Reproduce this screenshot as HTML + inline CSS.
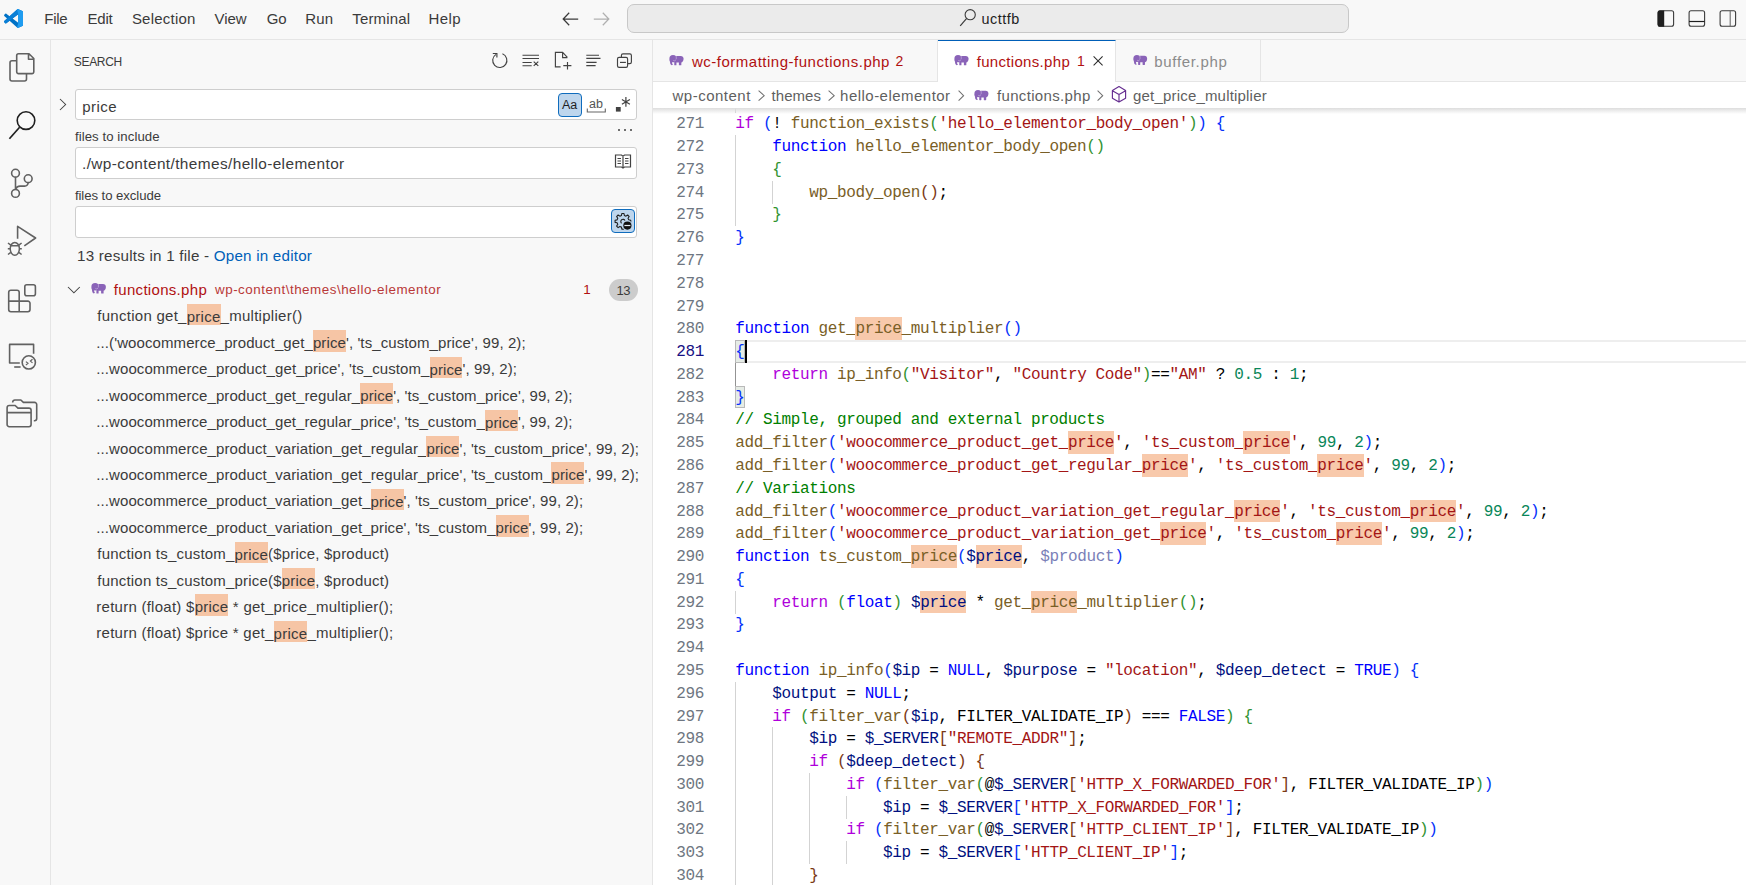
<!DOCTYPE html>
<html><head><meta charset="utf-8"><title>VS Code</title>
<style>
*{box-sizing:border-box;margin:0;padding:0}
html,body{width:1746px;height:885px;overflow:hidden;background:#f8f8f8;font-family:"Liberation Sans", sans-serif;color:#3b3b3b}
.abs{position:absolute}
.t{position:absolute;white-space:pre;line-height:1;font-family:"Liberation Sans", sans-serif}
svg{position:absolute;overflow:visible}
.ln{position:absolute;left:653px;width:51px;text-align:right;font-family:"Liberation Mono", monospace;font-size:16px;letter-spacing:-0.364px;color:#6e7681;white-space:pre}
.cl{position:absolute;left:735.3px;font-family:"Liberation Mono", monospace;font-size:16px;letter-spacing:-0.364px;white-space:pre;color:#000}
.k{color:#af00db}.f{color:#0000ff}.n{color:#795e26}.s{color:#a31515}.m{color:#098658}.c{color:#008000}.v{color:#001080}
.b1{color:#0431fa}.b2{color:#319331}.b3{color:#7b3814}.u{color:#7a7fb8}
.cl .hl{background:#f8c9ab;padding:2.9px 0 1.6px}
.t .hl{background:#f6c5a5;padding:3.6px 0 0.8px}
</style></head><body>

<div class="abs" style="left:0;top:0;width:1746px;height:40px;background:#f8f8f8;border-bottom:1px solid #e5e5e5"></div>
<svg style="left:4px;top:8.8px" width="19" height="19" viewBox="0 0 100 100">
<path d="M96.5 10.8 75.9 0.9c-2.4-1.2-5.2-0.7-7.1 1.2L29.4 38.1 12.2 25.1c-1.6-1.2-3.8-1.1-5.3 0.2L1.4 30.3c-1.8 1.7-1.8 4.5 0 6.2L16.3 50 1.4 63.5c-1.8 1.7-1.8 4.5 0 6.2l5.5 5c1.5 1.4 3.7 1.5 5.3 0.2l17.2-13L68.8 97.9c1.9 1.9 4.7 2.4 7.1 1.2l20.6-9.9c2.2-1 3.5-3.2 3.5-5.6V16.4c0-2.4-1.4-4.6-3.5-5.6zM75 72.7 45.1 50 75 27.3z" fill="#0072c6"/>
<path d="M29.4 61.9 12.2 74.9c-1.6 1.2-3.8 1.1-5.3-0.2l-5.5-5c-1.8-1.7-1.8-4.5 0-6.2L68.8 2.1c1.9-1.9 4.7-2.4 7.1-1.2L75 27.3z" fill="#0a7fd6"/>
<path d="M96.5 10.8 75.9 0.9c-2.4-1.2-5.2-0.7-7.1 1.2L75 27.3V72.7L68.8 97.9c1.9 1.9 4.7 2.4 7.1 1.2l20.6-9.9c2.2-1 3.5-3.2 3.5-5.6V16.4c0-2.4-1.4-4.6-3.5-5.6z" fill="#1f9cf0"/>
</svg>
<svg style="left:560px;top:10px" width="20" height="18" viewBox="0 0 20 18"><path d="M9.2 2.8 3.2 9 9.2 15.2M3.2 9H18.2" stroke="#3b3b3b" stroke-width="1.25" fill="none"/></svg>
<svg style="left:592px;top:10px" width="20" height="18" viewBox="0 0 20 18"><path d="M10.8 2.8 16.8 9 10.8 15.2M16.8 9H1.8" stroke="#b0b0b0" stroke-width="1.25" fill="none"/></svg>
<div class="abs" style="left:627px;top:4px;width:722px;height:29px;background:#ebebeb;border:1px solid #c8c8c8;border-radius:7px"></div>
<svg style="left:959px;top:8px" width="18" height="19" viewBox="0 0 18 19"><circle cx="11.2" cy="6.7" r="5.1" stroke="#3b3b3b" stroke-width="1.1" fill="none"/><path d="M7.7 10.4 1.2 17.8" stroke="#3b3b3b" stroke-width="1.2"/></svg>
<svg style="left:1657px;top:10px" width="18" height="18" viewBox="0 0 18 18"><rect x="1.1" y="0.7" width="15.5" height="15.6" rx="2" stroke="#3b3b3b" stroke-width="1.1" fill="none"/><path d="M0.6 2.7a2.2 2.2 0 0 1 2.2-2.2H7.2V16.7H2.8A2.2 2.2 0 0 1 0.6 14.5z" fill="#1f1f1f"/></svg>
<svg style="left:1688px;top:10px" width="18" height="18" viewBox="0 0 18 18"><rect x="1.1" y="0.7" width="15.5" height="15.6" rx="2" stroke="#3b3b3b" stroke-width="1.1" fill="none"/><path d="M1 11.5H16.5" stroke="#1f1f1f" stroke-width="1.2"/></svg>
<svg style="left:1719px;top:10px" width="18" height="18" viewBox="0 0 18 18"><rect x="1.1" y="0.7" width="15.5" height="15.6" rx="2" stroke="#3b3b3b" stroke-width="1.1" fill="none"/><path d="M11.2 0.7V16.3" stroke="#6b6b6b" stroke-width="1.1"/></svg>
<div class="abs" style="left:0;top:40px;width:51px;height:845px;background:#f8f8f8;border-right:1px solid #e5e5e5"></div>
<svg style="left:0;top:40px" width="50" height="50" viewBox="0 0 50 50"><path d="M16.6 20.8h-4.6a2 2 0 0 0-2 2V39a2 2 0 0 0 2 2H24.5a2 2 0 0 0 2-2V34" stroke="#616161" stroke-width="1.6" fill="none"/><path d="M18.5 13.7h10.5l4.8 4.8V31.8a1.8 1.8 0 0 1-1.8 1.8H18.5a1.8 1.8 0 0 1-1.8-1.8V15.5a1.8 1.8 0 0 1 1.8-1.8zM28.5 14v5.2h5.2" stroke="#616161" stroke-width="1.6" fill="none" stroke-linejoin="round"/></svg>
<svg style="left:0;top:100px" width="50" height="50" viewBox="0 0 50 50"><circle cx="26" cy="20.6" r="8.8" stroke="#1f1f1f" stroke-width="1.6" fill="none"/><path d="M19.6 27.2 9.4 38.8" stroke="#1f1f1f" stroke-width="1.7"/></svg>
<svg style="left:0;top:155px" width="50" height="50" viewBox="0 0 50 50"><circle cx="15.5" cy="18.2" r="3.9" stroke="#616161" stroke-width="1.6" fill="none"/><circle cx="28.2" cy="23.7" r="3.9" stroke="#616161" stroke-width="1.6" fill="none"/><circle cx="15.5" cy="38.4" r="3.9" stroke="#616161" stroke-width="1.6" fill="none"/><path d="M15.5 22.1V34.5M15.8 33.8c0.8-1.6 2.2-2.7 4.2-2.7h4.6c1.9 0 3.3-1.4 3.6-3.6" stroke="#616161" stroke-width="1.6" fill="none"/></svg>
<svg style="left:0;top:210px" width="50" height="50" viewBox="0 0 50 50"><path d="M17.6 28.8V16.4L35.6 28 24.3 35.8" stroke="#616161" stroke-width="1.6" fill="none" stroke-linejoin="round"/><ellipse cx="14.8" cy="38.8" rx="4.6" ry="6.4" stroke="#616161" stroke-width="1.5" fill="none"/><path d="M10.2 35.8H19.4M8 33l2.8 2.2M21.6 33l-2.8 2.2M7.8 38.8h2.6M19.2 38.8h2.6M8 44.5l2.8-2.2M21.6 44.5l-2.8-2.2" stroke="#616161" stroke-width="1.5" fill="none"/></svg>
<svg style="left:0;top:270px" width="50" height="50" viewBox="0 0 50 50"><path d="M8.7 22.4a2.2 2.2 0 0 1 2.2-2.2H17a2.2 2.2 0 0 1 2.2 2.2V31.1H27.8a2.2 2.2 0 0 1 2.2 2.2V39.6a2.2 2.2 0 0 1-2.2 2.2H10.9a2.2 2.2 0 0 1-2.2-2.2zM8.7 31.1H19.2V41.8" stroke="#616161" stroke-width="1.6" fill="none"/><rect x="24.8" y="14.8" width="10.6" height="10.9" rx="2" stroke="#616161" stroke-width="1.6" fill="none"/></svg>
<svg style="left:0;top:330px" width="50" height="50" viewBox="0 0 50 50"><path d="M19.8 33H9.6V14.4H33.6V23.8" stroke="#616161" stroke-width="1.6" fill="none" stroke-linejoin="round"/><path d="M14.2 37H20.6" stroke="#616161" stroke-width="1.6"/><circle cx="28.8" cy="32.4" r="6.6" stroke="#616161" stroke-width="1.6" fill="none"/><path d="M25.9 31.6 28 33.3 25.9 35.1M32.5 29.3 30.4 31.1 32.5 32.9" stroke="#616161" stroke-width="1.2" fill="none"/></svg>
<svg style="left:0;top:390px" width="50" height="50" viewBox="0 0 50 50"><path d="M12.7 12.6V12.2a2.2 2.2 0 0 1 2.2-2.2H20.8l2.6 2.4H34.5a2.2 2.2 0 0 1 2.2 2.2V28.6a2.2 2.2 0 0 1-2.2 2.2H33.8" stroke="#616161" stroke-width="1.6" fill="none"/><path d="M7.1 17.7a2.2 2.2 0 0 1 2.2-2.2H15.1l2.9 2.6H28.9a2.2 2.2 0 0 1 2.2 2.2V34.5a2.2 2.2 0 0 1-2.2 2.2H9.3a2.2 2.2 0 0 1-2.2-2.2zM7.1 22.6H31.1" stroke="#616161" stroke-width="1.6" fill="none"/></svg>
<div class="abs" style="left:51px;top:40px;width:602px;height:845px;background:#f8f8f8;border-right:1px solid #e5e5e5"></div>
<svg style="left:485px;top:47px" width="24" height="24" viewBox="0 0 24 24"><path d="M17.46 6.82A7.1 7.1 0 1 1 11.04 7.38" stroke="#424242" stroke-width="1.15" fill="none"/><path d="M7.8 6.5H11.9V10.6" stroke="#424242" stroke-width="1.15" fill="none"/></svg>
<svg style="left:520px;top:52px" width="20" height="18" viewBox="0 0 20 18"><path d="M2.5 3.2H19M2.5 6.5H19M2.5 10.5H11.7M2.5 13.7H11.7M13.7 9.6l4.6 4.3M18.3 9.6l-4.6 4.3" stroke="#424242" stroke-width="1.15" fill="none"/></svg>
<svg style="left:553px;top:50px" width="20" height="22" viewBox="0 0 20 22"><path d="M7.6 16.8H2.4V2.4H9.6L14.4 7.3M9.6 2.4V7.6H14.4M14.5 12V19.5M10.3 15.6H18.4" stroke="#424242" stroke-width="1.15" fill="none"/></svg>
<svg style="left:584px;top:52px" width="20" height="18" viewBox="0 0 20 18"><path d="M2.3 3.2H15M2.3 6.4H16.5M2.3 10.4H12.6M2.3 13.6H11.6" stroke="#424242" stroke-width="1.15" fill="none"/></svg>
<svg style="left:615px;top:51px" width="20" height="20" viewBox="0 0 20 20"><path d="M6.4 6.3V4.4A1.6 1.6 0 0 1 8 2.8H14.8A1.6 1.6 0 0 1 16.4 4.4V11A1.6 1.6 0 0 1 14.8 12.6H12.6" stroke="#424242" stroke-width="1.15" fill="none"/><rect x="2.5" y="6.3" width="10.1" height="10.1" rx="1.6" stroke="#424242" stroke-width="1.15" fill="none"/><path d="M5 11.4H10.9" stroke="#424242" stroke-width="1.15"/></svg>
<svg style="left:57px;top:97px" width="12" height="15" viewBox="0 0 12 15"><path d="M3 2 8.6 7.5 3 13" stroke="#424242" stroke-width="1.05" fill="none"/></svg>
<div class="abs" style="left:75px;top:89px;width:562px;height:31px;background:#fff;border:1px solid #cecece;border-radius:3px"></div>
<div class="abs" style="left:558px;top:93px;width:24px;height:24px;background:#bed6ed;border:1px solid #0f6cbd;border-radius:4px"></div>
<div class="t" style="left:562px;top:99px;font-size:12.5px;color:#1f1f1f">Aa</div>
<div class="t" style="left:589px;top:98px;font-size:12.5px;color:#555">ab</div>
<svg style="left:586px;top:108px" width="22" height="6" viewBox="0 0 22 6"><path d="M1.3 0.5V4H19.3V0.5" stroke="#666" stroke-width="1.1" fill="none"/></svg>
<svg style="left:614px;top:95px" width="18" height="18" viewBox="0 0 18 18"><rect x="1.9" y="12" width="4.8" height="4.6" fill="#424242"/><path d="M11.9 2.1V11.7M7.9 4.6l8 4.6M15.9 4.6 7.9 9.2" stroke="#424242" stroke-width="1.2" fill="none"/></svg>
<div class="abs" style="left:618px;top:128.5px;width:2.2px;height:2.2px;background:#424242;border-radius:1px"></div>
<div class="abs" style="left:624px;top:128.5px;width:2.2px;height:2.2px;background:#424242;border-radius:1px"></div>
<div class="abs" style="left:630px;top:128.5px;width:2.2px;height:2.2px;background:#424242;border-radius:1px"></div>
<div class="abs" style="left:75px;top:147px;width:562px;height:32px;background:#fff;border:1px solid #cecece;border-radius:3px"></div>
<svg style="left:613px;top:152px" width="20" height="18" viewBox="0 0 20 18"><path d="M2.5 3H8.5L10 4.2 11.5 3H17.5V15H11.5L10 16 8.5 15H2.5zM10 4.2V16M4.5 6.5H8M4.5 9H8M4.5 11.5H8M12 6.5H15.5M12 9H15.5M12 11.5H15.5" stroke="#424242" stroke-width="1.2" fill="none"/></svg>
<div class="abs" style="left:75px;top:206px;width:562px;height:32px;background:#fff;border:1px solid #cecece;border-radius:3px"></div>
<div class="abs" style="left:611px;top:209px;width:24px;height:24px;background:#bed6ed;border:1px solid #0f6cbd;border-radius:4px"></div>
<svg style="left:606px;top:204px" width="34" height="34" viewBox="0 0 34 34"><path d="M15.45 11.48 L15.80 9.48 L18.00 9.48 L18.35 11.48 L19.99 12.16 L21.65 10.99 L23.21 12.55 L22.04 14.21 L22.72 15.85 L24.72 16.20 L24.72 18.40 L22.72 18.75 L22.04 20.39 L23.21 22.05 L21.65 23.61 L19.99 22.44 L18.35 23.12 L18.00 25.12 L15.80 25.12 L15.45 23.12 L13.81 22.44 L12.15 23.61 L10.59 22.05 L11.76 20.39 L11.08 18.75 L9.08 18.40 L9.08 16.20 L11.08 15.85 L11.76 14.21 L10.59 12.55 L12.15 10.99 L13.81 12.16z" stroke="#1f1f1f" stroke-width="1.1" fill="none" stroke-linejoin="round"/><path d="M15.6 19.2A2.2 2.2 0 1 1 19 16.6" stroke="#1f1f1f" stroke-width="1.1" fill="none"/><circle cx="21.4" cy="21.5" r="5.2" fill="#bed6ed"/><circle cx="21.4" cy="21.6" r="4.1" fill="#111"/><path d="M18.4 21.5H24.4" stroke="#e8eef5" stroke-width="1.2"/></svg>
<svg style="left:66px;top:283px" width="16" height="12" viewBox="0 0 16 12"><path d="M2 4 7.9 9.8 13.8 4" stroke="#424242" stroke-width="1.05" fill="none"/></svg>
<svg style="left:91px;top:283px" width="15.00" height="11.00" viewBox="0 0 15 11"><g fill="#8a63b8"><ellipse cx="4.1" cy="3.8" rx="3.7" ry="3.7"/><path d="M7 0.9H12C13.8 0.9 14.9 2.2 14.9 3.9 14.9 5.8 13.9 7.7 12.2 7.7H7z"/><path d="M0.5 4.5 2.8 5.6 3.4 9.2 4.2 9.8 2.6 10.4 1.4 9.2z"/><rect x="5.4" y="5.5" width="2.2" height="5.1" rx="0.5"/><rect x="10.1" y="5.5" width="2.5" height="5.1" rx="0.5"/></g><path d="M7.4 0.6V4.3M4.4 5.6Q5.8 6.6 7.2 4.9" stroke="#e9def5" stroke-width="0.45" fill="none"/></svg>
<div class="abs" style="left:609px;top:279px;width:29px;height:22px;background:#cccccc;border-radius:11px"></div>
<div class="abs" style="left:653px;top:40px;width:1093px;height:42px;background:#f8f8f8;border-bottom:1px solid #e5e5e5"></div>
<div class="abs" style="left:653px;top:40px;width:285px;height:41px;border-right:1px solid #e5e5e5"></div>
<svg style="left:669px;top:55px" width="14.70" height="10.78" viewBox="0 0 15 11"><g fill="#8a63b8"><ellipse cx="4.1" cy="3.8" rx="3.7" ry="3.7"/><path d="M7 0.9H12C13.8 0.9 14.9 2.2 14.9 3.9 14.9 5.8 13.9 7.7 12.2 7.7H7z"/><path d="M0.5 4.5 2.8 5.6 3.4 9.2 4.2 9.8 2.6 10.4 1.4 9.2z"/><rect x="5.4" y="5.5" width="2.2" height="5.1" rx="0.5"/><rect x="10.1" y="5.5" width="2.5" height="5.1" rx="0.5"/></g><path d="M7.4 0.6V4.3M4.4 5.6Q5.8 6.6 7.2 4.9" stroke="#e9def5" stroke-width="0.45" fill="none"/></svg>
<div class="abs" style="left:938px;top:40px;width:178px;height:42px;background:#fff;border-top:1px solid #005fb8;border-right:1px solid #e5e5e5"></div>
<svg style="left:954px;top:55px" width="14.70" height="10.78" viewBox="0 0 15 11"><g fill="#8a63b8"><ellipse cx="4.1" cy="3.8" rx="3.7" ry="3.7"/><path d="M7 0.9H12C13.8 0.9 14.9 2.2 14.9 3.9 14.9 5.8 13.9 7.7 12.2 7.7H7z"/><path d="M0.5 4.5 2.8 5.6 3.4 9.2 4.2 9.8 2.6 10.4 1.4 9.2z"/><rect x="5.4" y="5.5" width="2.2" height="5.1" rx="0.5"/><rect x="10.1" y="5.5" width="2.5" height="5.1" rx="0.5"/></g><path d="M7.4 0.6V4.3M4.4 5.6Q5.8 6.6 7.2 4.9" stroke="#e9def5" stroke-width="0.45" fill="none"/></svg>
<svg style="left:1091px;top:54px" width="14" height="14" viewBox="0 0 14 14"><path d="M2.6 2.4 11.6 11.4M11.6 2.4 2.6 11.4" stroke="#2b2b2b" stroke-width="1.05"/></svg>
<div class="abs" style="left:1116px;top:40px;width:145px;height:41px;border-right:1px solid #e5e5e5"></div>
<svg style="left:1133px;top:55px" width="14.25" height="10.45" viewBox="0 0 15 11"><g fill="#8a63b8"><ellipse cx="4.1" cy="3.8" rx="3.7" ry="3.7"/><path d="M7 0.9H12C13.8 0.9 14.9 2.2 14.9 3.9 14.9 5.8 13.9 7.7 12.2 7.7H7z"/><path d="M0.5 4.5 2.8 5.6 3.4 9.2 4.2 9.8 2.6 10.4 1.4 9.2z"/><rect x="5.4" y="5.5" width="2.2" height="5.1" rx="0.5"/><rect x="10.1" y="5.5" width="2.5" height="5.1" rx="0.5"/></g><path d="M7.4 0.6V4.3M4.4 5.6Q5.8 6.6 7.2 4.9" stroke="#e9def5" stroke-width="0.45" fill="none"/></svg>
<div class="abs" style="left:653px;top:82px;width:1093px;height:803px;background:#fff"></div>
<svg style="left:758px;top:89.8px" width="7" height="11.299999999999997" viewBox="0 0 7 11.299999999999997"><path d="M0.6 0.6 6.2 5.649999999999999 0.6 10.699999999999998" stroke="#707070" stroke-width="1.05" fill="none"/></svg>
<svg style="left:828px;top:89.8px" width="7" height="11.299999999999997" viewBox="0 0 7 11.299999999999997"><path d="M0.6 0.6 6.2 5.649999999999999 0.6 10.699999999999998" stroke="#707070" stroke-width="1.05" fill="none"/></svg>
<svg style="left:957.6px;top:89.8px" width="6.399999999999977" height="11.299999999999997" viewBox="0 0 6.399999999999977 11.299999999999997"><path d="M0.6 0.6 5.599999999999977 5.649999999999999 0.6 10.699999999999998" stroke="#707070" stroke-width="1.05" fill="none"/></svg>
<svg style="left:1097px;top:89.8px" width="6.5" height="11.299999999999997" viewBox="0 0 6.5 11.299999999999997"><path d="M0.6 0.6 5.7 5.649999999999999 0.6 10.699999999999998" stroke="#707070" stroke-width="1.05" fill="none"/></svg>
<svg style="left:974px;top:89.5px" width="14.55" height="10.67" viewBox="0 0 15 11"><g fill="#8a63b8"><ellipse cx="4.1" cy="3.8" rx="3.7" ry="3.7"/><path d="M7 0.9H12C13.8 0.9 14.9 2.2 14.9 3.9 14.9 5.8 13.9 7.7 12.2 7.7H7z"/><path d="M0.5 4.5 2.8 5.6 3.4 9.2 4.2 9.8 2.6 10.4 1.4 9.2z"/><rect x="5.4" y="5.5" width="2.2" height="5.1" rx="0.5"/><rect x="10.1" y="5.5" width="2.5" height="5.1" rx="0.5"/></g><path d="M7.4 0.6V4.3M4.4 5.6Q5.8 6.6 7.2 4.9" stroke="#e9def5" stroke-width="0.45" fill="none"/></svg>
<svg style="left:1110px;top:84.5px" width="18" height="18" viewBox="0 0 18 18"><path d="M9 1.6 15.6 5.5V13.2L9 17 2.4 13.2V5.5zM2.4 5.7 9 9.4 15.6 5.7M9 9.4V17" stroke="#652d90" stroke-width="1.15" fill="none" stroke-linejoin="round"/></svg>
<div class="t" style="left:44.30px;top:11.03px;font-size:15px;letter-spacing:-0.267px;color:#3b3b3b;">File</div>
<div class="t" style="left:87.50px;top:11.03px;font-size:15px;letter-spacing:-0.233px;color:#3b3b3b;">Edit</div>
<div class="t" style="left:131.90px;top:11.03px;font-size:15px;letter-spacing:0.225px;color:#3b3b3b;">Selection</div>
<div class="t" style="left:214.50px;top:11.03px;font-size:15px;letter-spacing:-0.067px;color:#3b3b3b;">View</div>
<div class="t" style="left:266.80px;top:11.03px;font-size:15px;letter-spacing:-0.300px;color:#3b3b3b;">Go</div>
<div class="t" style="left:305.30px;top:11.03px;font-size:15px;letter-spacing:0.100px;color:#3b3b3b;">Run</div>
<div class="t" style="left:352.30px;top:11.03px;font-size:15px;letter-spacing:0.157px;color:#3b3b3b;">Terminal</div>
<div class="t" style="left:428.60px;top:11.03px;font-size:15px;letter-spacing:0.367px;color:#3b3b3b;">Help</div>
<div class="t" style="left:981.60px;top:11.53px;font-size:14.4px;letter-spacing:0.480px;color:#1e1e1e;">ucttfb</div>
<div class="t" style="left:73.80px;top:55.86px;font-size:12px;letter-spacing:-0.320px;color:#3b3b3b;">SEARCH</div>
<div class="t" style="left:82.20px;top:98.53px;font-size:15px;letter-spacing:0.500px;color:#3b3b3b;">price</div>
<div class="t" style="left:74.90px;top:130.05px;font-size:13.2px;letter-spacing:0.073px;color:#3b3b3b;">files to include</div>
<div class="t" style="left:82.00px;top:155.89px;font-size:15.4px;letter-spacing:0.391px;color:#3b3b3b;">./wp-content/themes/hello-elementor</div>
<div class="t" style="left:74.90px;top:188.85px;font-size:13.2px;letter-spacing:-0.073px;color:#3b3b3b;">files to exclude</div>
<div class="t" style="left:77.10px;top:247.76px;font-size:15.2px;letter-spacing:0.214px;color:#3b3b3b;">13 results in 1 file - <span style="color:#005fb8">Open in editor</span></div>
<div class="t" style="left:113.80px;top:281.82px;font-size:15px;letter-spacing:0.308px;color:#b01011;">functions.php</div>
<div class="t" style="left:215.00px;top:283.18px;font-size:13.4px;letter-spacing:0.516px;color:#b93838;">wp-content\themes\hello-elementor</div>
<div class="t" style="left:583.30px;top:282.98px;font-size:13.4px;letter-spacing:0.000px;color:#b01011;">1</div>
<div class="t" style="left:616.60px;top:283.62px;font-size:13px;letter-spacing:-0.600px;color:#3b3b3b;">13</div>
<div class="t" style="left:97.30px;top:308.43px;font-size:15px;letter-spacing:0.270px;color:#3b3b3b;">function get_<span class="hl">price</span>_multiplier()</div>
<div class="t" style="left:96.30px;top:334.85px;font-size:15px;letter-spacing:0.097px;color:#3b3b3b;">...(&#x27;woocommerce_product_get_<span class="hl">price</span>&#x27;, &#x27;ts_custom_price&#x27;, 99, 2);</div>
<div class="t" style="left:96.30px;top:361.27px;font-size:15px;letter-spacing:0.087px;color:#3b3b3b;">...woocommerce_product_get_price&#x27;, &#x27;ts_custom_<span class="hl">price</span>&#x27;, 99, 2);</div>
<div class="t" style="left:96.30px;top:387.69px;font-size:15px;letter-spacing:0.084px;color:#3b3b3b;">...woocommerce_product_get_regular_<span class="hl">price</span>&#x27;, &#x27;ts_custom_price&#x27;, 99, 2);</div>
<div class="t" style="left:96.30px;top:414.11px;font-size:15px;letter-spacing:0.084px;color:#3b3b3b;">...woocommerce_product_get_regular_price&#x27;, &#x27;ts_custom_<span class="hl">price</span>&#x27;, 99, 2);</div>
<div class="t" style="left:96.30px;top:440.53px;font-size:15px;letter-spacing:0.092px;color:#3b3b3b;">...woocommerce_product_variation_get_regular_<span class="hl">price</span>&#x27;, &#x27;ts_custom_price&#x27;, 99, 2);</div>
<div class="t" style="left:96.30px;top:466.94px;font-size:15px;letter-spacing:0.092px;color:#3b3b3b;">...woocommerce_product_variation_get_regular_price&#x27;, &#x27;ts_custom_<span class="hl">price</span>&#x27;, 99, 2);</div>
<div class="t" style="left:96.30px;top:493.37px;font-size:15px;letter-spacing:0.090px;color:#3b3b3b;">...woocommerce_product_variation_get_<span class="hl">price</span>&#x27;, &#x27;ts_custom_price&#x27;, 99, 2);</div>
<div class="t" style="left:96.30px;top:519.79px;font-size:15px;letter-spacing:0.090px;color:#3b3b3b;">...woocommerce_product_variation_get_price&#x27;, &#x27;ts_custom_<span class="hl">price</span>&#x27;, 99, 2);</div>
<div class="t" style="left:97.30px;top:546.21px;font-size:15px;letter-spacing:0.202px;color:#3b3b3b;">function ts_custom_<span class="hl">price</span>($price, $product)</div>
<div class="t" style="left:97.30px;top:572.63px;font-size:15px;letter-spacing:0.202px;color:#3b3b3b;">function ts_custom_price($<span class="hl">price</span>, $product)</div>
<div class="t" style="left:96.30px;top:599.05px;font-size:15px;letter-spacing:0.257px;color:#3b3b3b;">return (float) $<span class="hl">price</span> * get_price_multiplier();</div>
<div class="t" style="left:96.30px;top:625.47px;font-size:15px;letter-spacing:0.257px;color:#3b3b3b;">return (float) $price * get_<span class="hl">price</span>_multiplier();</div>
<div class="t" style="left:691.90px;top:53.62px;font-size:15px;letter-spacing:0.512px;color:#b01011;">wc-formatting-functions.php</div>
<div class="t" style="left:895.50px;top:54.47px;font-size:14px;letter-spacing:0.000px;color:#b01011;">2</div>
<div class="t" style="left:976.70px;top:53.62px;font-size:15px;letter-spacing:0.317px;color:#b01011;">functions.php</div>
<div class="t" style="left:1077.00px;top:54.47px;font-size:14px;letter-spacing:0.000px;color:#b01011;">1</div>
<div class="t" style="left:1154.30px;top:53.62px;font-size:15px;letter-spacing:0.667px;color:#8b8b8b;">buffer.php</div>
<div class="t" style="left:672.50px;top:87.92px;font-size:15px;letter-spacing:0.500px;color:#5f5f5f;">wp-content</div>
<div class="t" style="left:771.60px;top:87.92px;font-size:15px;letter-spacing:0.020px;color:#5f5f5f;">themes</div>
<div class="t" style="left:840.10px;top:87.92px;font-size:15px;letter-spacing:0.471px;color:#5f5f5f;">hello-elementor</div>
<div class="t" style="left:997.00px;top:87.92px;font-size:15px;letter-spacing:0.333px;color:#5f5f5f;">functions.php</div>
<div class="t" style="left:1133.00px;top:87.92px;font-size:15px;letter-spacing:0.189px;color:#5f5f5f;">get_price_multiplier</div>
<div class="abs" style="left:736px;top:339.60px;width:1010px;height:23.28px;border-top:2px solid #eeeeee;border-bottom:2px solid #eeeeee"></div>
<div class="abs" style="left:735.40px;top:135.08px;width:1px;height:23.08px;background:#d3d3d3"></div>
<div class="abs" style="left:735.40px;top:157.86px;width:1px;height:23.08px;background:#d3d3d3"></div>
<div class="abs" style="left:735.40px;top:180.64px;width:1px;height:23.08px;background:#d3d3d3"></div>
<div class="abs" style="left:772.34px;top:180.64px;width:1px;height:23.08px;background:#d3d3d3"></div>
<div class="abs" style="left:735.40px;top:203.42px;width:1px;height:23.08px;background:#d3d3d3"></div>
<div class="abs" style="left:735.40px;top:362.88px;width:1px;height:23.08px;background:#939393"></div>
<div class="abs" style="left:735.40px;top:590.68px;width:1px;height:23.08px;background:#d3d3d3"></div>
<div class="abs" style="left:735.40px;top:681.80px;width:1px;height:23.08px;background:#d3d3d3"></div>
<div class="abs" style="left:735.40px;top:704.58px;width:1px;height:23.08px;background:#d3d3d3"></div>
<div class="abs" style="left:735.40px;top:727.36px;width:1px;height:23.08px;background:#d3d3d3"></div>
<div class="abs" style="left:772.34px;top:727.36px;width:1px;height:23.08px;background:#d3d3d3"></div>
<div class="abs" style="left:735.40px;top:750.14px;width:1px;height:23.08px;background:#d3d3d3"></div>
<div class="abs" style="left:772.34px;top:750.14px;width:1px;height:23.08px;background:#d3d3d3"></div>
<div class="abs" style="left:735.40px;top:772.92px;width:1px;height:23.08px;background:#d3d3d3"></div>
<div class="abs" style="left:772.34px;top:772.92px;width:1px;height:23.08px;background:#d3d3d3"></div>
<div class="abs" style="left:809.29px;top:772.92px;width:1px;height:23.08px;background:#d3d3d3"></div>
<div class="abs" style="left:735.40px;top:795.70px;width:1px;height:23.08px;background:#d3d3d3"></div>
<div class="abs" style="left:772.34px;top:795.70px;width:1px;height:23.08px;background:#d3d3d3"></div>
<div class="abs" style="left:809.29px;top:795.70px;width:1px;height:23.08px;background:#d3d3d3"></div>
<div class="abs" style="left:846.23px;top:795.70px;width:1px;height:23.08px;background:#d3d3d3"></div>
<div class="abs" style="left:735.40px;top:818.48px;width:1px;height:23.08px;background:#d3d3d3"></div>
<div class="abs" style="left:772.34px;top:818.48px;width:1px;height:23.08px;background:#d3d3d3"></div>
<div class="abs" style="left:809.29px;top:818.48px;width:1px;height:23.08px;background:#d3d3d3"></div>
<div class="abs" style="left:735.40px;top:841.26px;width:1px;height:23.08px;background:#d3d3d3"></div>
<div class="abs" style="left:772.34px;top:841.26px;width:1px;height:23.08px;background:#d3d3d3"></div>
<div class="abs" style="left:809.29px;top:841.26px;width:1px;height:23.08px;background:#d3d3d3"></div>
<div class="abs" style="left:846.23px;top:841.26px;width:1px;height:23.08px;background:#d3d3d3"></div>
<div class="abs" style="left:735.40px;top:864.04px;width:1px;height:23.08px;background:#d3d3d3"></div>
<div class="abs" style="left:772.34px;top:864.04px;width:1px;height:23.08px;background:#d3d3d3"></div>
<div class="abs" style="left:735.4px;top:108px;width:1px;height:5px;background:#d3d3d3"></div>
<div class="abs" style="left:735px;top:340.10px;width:10px;height:22.78px;background:#e6ece6;border:1px solid #b9b9b9"></div>
<div class="abs" style="left:735px;top:385.66px;width:10px;height:22.78px;background:#e6ece6;border:1px solid #b9b9b9"></div>
<div class="ln" style="top:113.30px;height:22.78px;line-height:22.78px;color:#6e7681">271</div>
<div class="cl" style="top:113.30px;height:22.78px;line-height:22.78px"><span class="k">if</span> <span class="b1">(</span>! <span class="n">function_exists</span><span class="b2">(</span><span class="s">&#x27;hello_elementor_body_open&#x27;</span><span class="b2">)</span><span class="b1">)</span> <span class="b1">{</span></div>
<div class="ln" style="top:136.08px;height:22.78px;line-height:22.78px;color:#6e7681">272</div>
<div class="cl" style="top:136.08px;height:22.78px;line-height:22.78px">    <span class="f">function</span> <span class="n">hello_elementor_body_open</span><span class="b2">()</span></div>
<div class="ln" style="top:158.86px;height:22.78px;line-height:22.78px;color:#6e7681">273</div>
<div class="cl" style="top:158.86px;height:22.78px;line-height:22.78px">    <span class="b2">{</span></div>
<div class="ln" style="top:181.64px;height:22.78px;line-height:22.78px;color:#6e7681">274</div>
<div class="cl" style="top:181.64px;height:22.78px;line-height:22.78px">        <span class="n">wp_body_open</span><span class="b3">()</span>;</div>
<div class="ln" style="top:204.42px;height:22.78px;line-height:22.78px;color:#6e7681">275</div>
<div class="cl" style="top:204.42px;height:22.78px;line-height:22.78px">    <span class="b2">}</span></div>
<div class="ln" style="top:227.20px;height:22.78px;line-height:22.78px;color:#6e7681">276</div>
<div class="cl" style="top:227.20px;height:22.78px;line-height:22.78px"><span class="b1">}</span></div>
<div class="ln" style="top:249.98px;height:22.78px;line-height:22.78px;color:#6e7681">277</div>
<div class="cl" style="top:249.98px;height:22.78px;line-height:22.78px"></div>
<div class="ln" style="top:272.76px;height:22.78px;line-height:22.78px;color:#6e7681">278</div>
<div class="cl" style="top:272.76px;height:22.78px;line-height:22.78px"></div>
<div class="ln" style="top:295.54px;height:22.78px;line-height:22.78px;color:#6e7681">279</div>
<div class="cl" style="top:295.54px;height:22.78px;line-height:22.78px"></div>
<div class="ln" style="top:318.32px;height:22.78px;line-height:22.78px;color:#6e7681">280</div>
<div class="cl" style="top:318.32px;height:22.78px;line-height:22.78px"><span class="f">function</span> <span class="n">get_</span><span class="n hl">price</span><span class="n">_multiplier</span><span class="b1">()</span></div>
<div class="ln" style="top:341.10px;height:22.78px;line-height:22.78px;color:#171184">281</div>
<div class="cl" style="top:341.10px;height:22.78px;line-height:22.78px"><span class="b1">{</span></div>
<div class="ln" style="top:363.88px;height:22.78px;line-height:22.78px;color:#6e7681">282</div>
<div class="cl" style="top:363.88px;height:22.78px;line-height:22.78px">    <span class="k">return</span> <span class="n">ip_info</span><span class="b2">(</span><span class="s">&quot;Visitor&quot;</span>, <span class="s">&quot;Country Code&quot;</span><span class="b2">)</span>==<span class="s">&quot;AM&quot;</span> ? <span class="m">0.5</span> : <span class="m">1</span>;</div>
<div class="ln" style="top:386.66px;height:22.78px;line-height:22.78px;color:#6e7681">283</div>
<div class="cl" style="top:386.66px;height:22.78px;line-height:22.78px"><span class="b1">}</span></div>
<div class="ln" style="top:409.44px;height:22.78px;line-height:22.78px;color:#6e7681">284</div>
<div class="cl" style="top:409.44px;height:22.78px;line-height:22.78px"><span class="c">// Simple, grouped and external products</span></div>
<div class="ln" style="top:432.22px;height:22.78px;line-height:22.78px;color:#6e7681">285</div>
<div class="cl" style="top:432.22px;height:22.78px;line-height:22.78px"><span class="n">add_filter</span><span class="b1">(</span><span class="s">&#x27;woocommerce_product_get_</span><span class="s hl">price</span><span class="s">&#x27;</span>, <span class="s">&#x27;ts_custom_</span><span class="s hl">price</span><span class="s">&#x27;</span>, <span class="m">99</span>, <span class="m">2</span><span class="b1">)</span>;</div>
<div class="ln" style="top:455.00px;height:22.78px;line-height:22.78px;color:#6e7681">286</div>
<div class="cl" style="top:455.00px;height:22.78px;line-height:22.78px"><span class="n">add_filter</span><span class="b1">(</span><span class="s">&#x27;woocommerce_product_get_regular_</span><span class="s hl">price</span><span class="s">&#x27;</span>, <span class="s">&#x27;ts_custom_</span><span class="s hl">price</span><span class="s">&#x27;</span>, <span class="m">99</span>, <span class="m">2</span><span class="b1">)</span>;</div>
<div class="ln" style="top:477.78px;height:22.78px;line-height:22.78px;color:#6e7681">287</div>
<div class="cl" style="top:477.78px;height:22.78px;line-height:22.78px"><span class="c">// Variations</span></div>
<div class="ln" style="top:500.56px;height:22.78px;line-height:22.78px;color:#6e7681">288</div>
<div class="cl" style="top:500.56px;height:22.78px;line-height:22.78px"><span class="n">add_filter</span><span class="b1">(</span><span class="s">&#x27;woocommerce_product_variation_get_regular_</span><span class="s hl">price</span><span class="s">&#x27;</span>, <span class="s">&#x27;ts_custom_</span><span class="s hl">price</span><span class="s">&#x27;</span>, <span class="m">99</span>, <span class="m">2</span><span class="b1">)</span>;</div>
<div class="ln" style="top:523.34px;height:22.78px;line-height:22.78px;color:#6e7681">289</div>
<div class="cl" style="top:523.34px;height:22.78px;line-height:22.78px"><span class="n">add_filter</span><span class="b1">(</span><span class="s">&#x27;woocommerce_product_variation_get_</span><span class="s hl">price</span><span class="s">&#x27;</span>, <span class="s">&#x27;ts_custom_</span><span class="s hl">price</span><span class="s">&#x27;</span>, <span class="m">99</span>, <span class="m">2</span><span class="b1">)</span>;</div>
<div class="ln" style="top:546.12px;height:22.78px;line-height:22.78px;color:#6e7681">290</div>
<div class="cl" style="top:546.12px;height:22.78px;line-height:22.78px"><span class="f">function</span> <span class="n">ts_custom_</span><span class="n hl">price</span><span class="b1">(</span><span class="v">$</span><span class="v hl">price</span>, <span class="u">$product</span><span class="b1">)</span></div>
<div class="ln" style="top:568.90px;height:22.78px;line-height:22.78px;color:#6e7681">291</div>
<div class="cl" style="top:568.90px;height:22.78px;line-height:22.78px"><span class="b1">{</span></div>
<div class="ln" style="top:591.68px;height:22.78px;line-height:22.78px;color:#6e7681">292</div>
<div class="cl" style="top:591.68px;height:22.78px;line-height:22.78px">    <span class="k">return</span> <span class="b2">(</span><span class="f">float</span><span class="b2">)</span> <span class="v">$</span><span class="v hl">price</span> * <span class="n">get_</span><span class="n hl">price</span><span class="n">_multiplier</span><span class="b2">()</span>;</div>
<div class="ln" style="top:614.46px;height:22.78px;line-height:22.78px;color:#6e7681">293</div>
<div class="cl" style="top:614.46px;height:22.78px;line-height:22.78px"><span class="b1">}</span></div>
<div class="ln" style="top:637.24px;height:22.78px;line-height:22.78px;color:#6e7681">294</div>
<div class="cl" style="top:637.24px;height:22.78px;line-height:22.78px"></div>
<div class="ln" style="top:660.02px;height:22.78px;line-height:22.78px;color:#6e7681">295</div>
<div class="cl" style="top:660.02px;height:22.78px;line-height:22.78px"><span class="f">function</span> <span class="n">ip_info</span><span class="b1">(</span><span class="v">$ip</span> = <span class="f">NULL</span>, <span class="v">$purpose</span> = <span class="s">&quot;location&quot;</span>, <span class="v">$deep_detect</span> = <span class="f">TRUE</span><span class="b1">)</span> <span class="b1">{</span></div>
<div class="ln" style="top:682.80px;height:22.78px;line-height:22.78px;color:#6e7681">296</div>
<div class="cl" style="top:682.80px;height:22.78px;line-height:22.78px">    <span class="v">$output</span> = <span class="f">NULL</span>;</div>
<div class="ln" style="top:705.58px;height:22.78px;line-height:22.78px;color:#6e7681">297</div>
<div class="cl" style="top:705.58px;height:22.78px;line-height:22.78px">    <span class="k">if</span> <span class="b2">(</span><span class="n">filter_var</span><span class="b3">(</span><span class="v">$ip</span>, FILTER_VALIDATE_IP<span class="b3">)</span> === <span class="f">FALSE</span><span class="b2">)</span> <span class="b2">{</span></div>
<div class="ln" style="top:728.36px;height:22.78px;line-height:22.78px;color:#6e7681">298</div>
<div class="cl" style="top:728.36px;height:22.78px;line-height:22.78px">        <span class="v">$ip</span> = <span class="v">$_SERVER</span><span class="b3">[</span><span class="s">&quot;REMOTE_ADDR&quot;</span><span class="b3">]</span>;</div>
<div class="ln" style="top:751.14px;height:22.78px;line-height:22.78px;color:#6e7681">299</div>
<div class="cl" style="top:751.14px;height:22.78px;line-height:22.78px">        <span class="k">if</span> <span class="b3">(</span><span class="v">$deep_detect</span><span class="b3">)</span> <span class="b3">{</span></div>
<div class="ln" style="top:773.92px;height:22.78px;line-height:22.78px;color:#6e7681">300</div>
<div class="cl" style="top:773.92px;height:22.78px;line-height:22.78px">            <span class="k">if</span> <span class="b1">(</span><span class="n">filter_var</span><span class="b2">(</span>@<span class="v">$_SERVER</span><span class="b3">[</span><span class="s">&#x27;HTTP_X_FORWARDED_FOR&#x27;</span><span class="b3">]</span>, FILTER_VALIDATE_IP<span class="b2">)</span><span class="b1">)</span></div>
<div class="ln" style="top:796.70px;height:22.78px;line-height:22.78px;color:#6e7681">301</div>
<div class="cl" style="top:796.70px;height:22.78px;line-height:22.78px">                <span class="v">$ip</span> = <span class="v">$_SERVER</span><span class="b1">[</span><span class="s">&#x27;HTTP_X_FORWARDED_FOR&#x27;</span><span class="b1">]</span>;</div>
<div class="ln" style="top:819.48px;height:22.78px;line-height:22.78px;color:#6e7681">302</div>
<div class="cl" style="top:819.48px;height:22.78px;line-height:22.78px">            <span class="k">if</span> <span class="b1">(</span><span class="n">filter_var</span><span class="b2">(</span>@<span class="v">$_SERVER</span><span class="b3">[</span><span class="s">&#x27;HTTP_CLIENT_IP&#x27;</span><span class="b3">]</span>, FILTER_VALIDATE_IP<span class="b2">)</span><span class="b1">)</span></div>
<div class="ln" style="top:842.26px;height:22.78px;line-height:22.78px;color:#6e7681">303</div>
<div class="cl" style="top:842.26px;height:22.78px;line-height:22.78px">                <span class="v">$ip</span> = <span class="v">$_SERVER</span><span class="b1">[</span><span class="s">&#x27;HTTP_CLIENT_IP&#x27;</span><span class="b1">]</span>;</div>
<div class="ln" style="top:865.04px;height:22.78px;line-height:22.78px;color:#6e7681">304</div>
<div class="cl" style="top:865.04px;height:22.78px;line-height:22.78px">        <span class="b3">}</span></div>
<div class="abs" style="left:745px;top:340.10px;width:2px;height:22.78px;background:#000"></div>
<div class="abs" style="left:653px;top:108px;width:1093px;height:6px;background:linear-gradient(#dddddd,rgba(221,221,221,0))"></div>
</body></html>
